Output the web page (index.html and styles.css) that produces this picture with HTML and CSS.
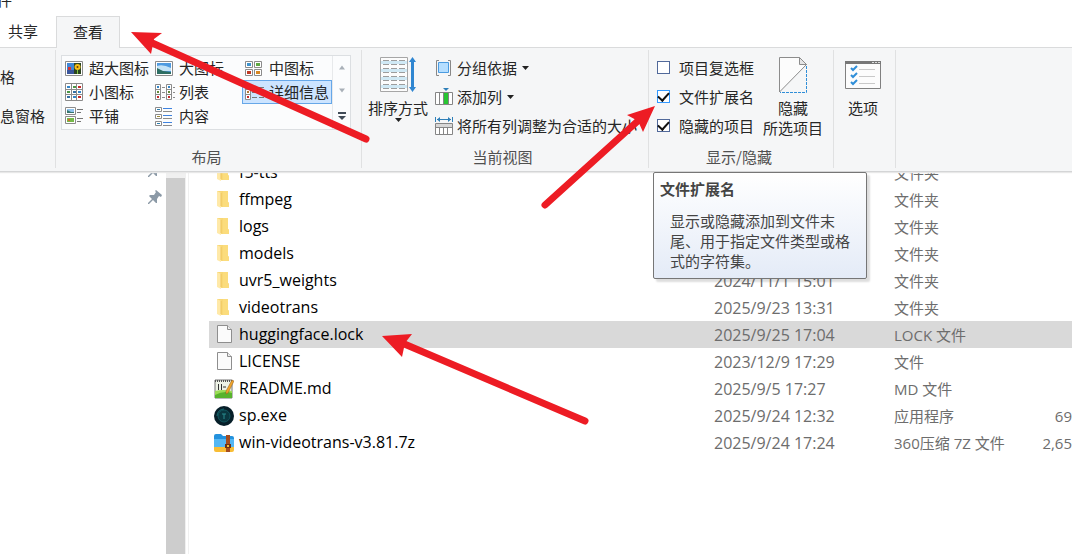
FILE: index.html
```
<!DOCTYPE html>
<html lang="zh-CN">
<head>
  <meta charset="UTF-8">
  <title>文件资源管理器</title>
  <link rel="stylesheet" href="styles.css">
</head>
<body>
  <!-- shared icons -->
  <svg class="defs" width="0" height="0">
    <symbol id="folder" viewBox="0 0 20 20">
      <path d="M3 1h11v11l1 1v4H5z" fill="#f8d775"/>
      <path d="M9 1h5v11l1 1v4H9z" fill="#fbdc7c"/>
      <path d="M3 1l4 2v15l-4-2z" fill="#ffe9a8"/>
      <path d="M7 3v13" stroke="#eec45a" fill="none"/>
    </symbol>
    <symbol id="doc" viewBox="0 0 20 20">
      <path d="M3.500.5h10l4 4v13h-14z" fill="#fbfbfb" stroke="#8e8e8e"/>
      <path d="M13.500.5v4h4" fill="#eee" stroke="#8e8e8e"/>
    </symbol>
    <symbol id="pin" viewBox="0 0 14 14">
      <path d="M8 0l6 5-1 2-2-1-2 3v4l-1 0-3-3-4 4-1 0 0-1 4-4-3-3 1-1h4l2-3-1-1z" fill="#8b99a6"/>
    </symbol>
    <symbol id="scene" viewBox="0 0 6 5">
      <path d="M0 0h6v5H0z" fill="#8fc3ee"/>
      <path d="M0 2l2 1 4 1v1H0z" fill="#35746c"/>
    </symbol>
  </svg>

  <header class="titlebar">件</header>
  <nav class="tabs">
    <button class="tab">共享</button>
    <button class="tab active">查看</button>
  </nav>

  <div class="ribbon">
    <section class="group panes">
      <button>格</button>
      <button>息窗格</button>
    </section>

    <section class="group layout">
      <div class="gallery">
        <div class="views">
          <button><svg width="18" height="15"><path d="M.5.5h17v14H.5z" fill="#fff" stroke="#8b8b8b"/><path d="M2 2h14v11H2z" fill="#3f86d8"/><path d="M2 9h7v4H2z" fill="#39559c"/><path d="M3 6h3v3H3z" fill="#d63434"/><path d="M9 2h7v11H9z" fill="#2b4420"/><circle cx="12.500" cy="6" r="3" fill="#f6bf19"/><circle cx="12.500" cy="6" r="1" fill="#663b0d"/><path d="M12 9h1v4h-1z" fill="#7fc243"/></svg>超大图标</button>
          <button><svg width="18" height="15"><path d="M.5.5h17v14H.5z" fill="#fff" stroke="#8b8b8b"/><path d="M2 2h14v11H2z" fill="#4e9ae0"/><path d="M2 5q6-2 14 2v3H2z" fill="#c3e2f6"/><path d="M2 7l6 3 8 1v2H2z" fill="#2d6e63"/></svg>大图标</button>
          <button><svg width="18" height="15"><g fill="#fff" stroke="#8b8b8b"><path d="M.5.5h7v6h-7zM9.500.5h7v6h-7zM.5 8.500h7v6h-7zM9.500 8.500h7v6h-7z"/></g><path d="M2 2h4v3H2z" fill="#3e92cc"/><path d="M11 2h4v3h-4z" fill="#5fa843"/><path d="M2 10h4v3H2z" fill="#c03a24"/><path d="M11 10h4v3h-4z" fill="#d78723"/></svg>中图标</button>
          <button><svg width="18" height="18"><g fill="#fff" stroke="#8b8b8b"><path d="M.5.5h17v17H.5zM6.500.5v17M11.500.5v17M.5 6.500h17M.5 11.500h17"/></g><path d="M2 3h3v2H2zM13 8h3v2h-3zM8 13h3v2H8z" fill="#3285c8"/><path d="M8 3h3v2H8zM2 8h3v2H2z" fill="#4d9748"/><path d="M13 3h3v2h-3zM13 13h3v2h-3z" fill="#c82929"/><path d="M8 8h3v2H8zM2 13h3v2H2z" fill="#356fa4"/></svg>小图标</button>
          <button><svg width="20" height="16"><g fill="#fff" stroke="#8b8b8b"><path d="M.5.5h5v15h-5zM.5 5.500h5M.5 10.500h5M11.500.5h5v15h-5zM11.500 5.500h5M11.500 10.500h5M7 3.500h3M7 8.500h3M7 13.500h3M18 3.500h2M18 8.500h2M18 13.500h2"/></g><path d="M2 2h2v2H2zM13 2h2v2h-2z" fill="#3285c8"/><path d="M2 7h2v2H2zM13 7h2v2h-2z" fill="#638b3a"/><path d="M2 12h2v2H2zM13 12h2v2h-2z" fill="#c82929"/></svg>列表</button>
          <button class="selected"><svg width="20" height="16"><g fill="#fff" stroke="#8b8b8b"><path d="M.5.5h5v15h-5zM.5 5.500h5M.5 10.500h5"/></g><path d="M7 3.500h5M14 3.500h5M7 8.500h5M14 8.500h5M7 13.500h5M14 13.500h5" stroke="#777"/><path d="M2 2h2v2H2z" fill="#3285c8"/><path d="M2 7h2v2H2z" fill="#b07733"/><path d="M2 12h2v2H2z" fill="#c82929"/></svg>详细信息</button>
          <button><svg width="18" height="18"><g fill="#fff" stroke="#8b8b8b"><path d="M.5.5h10v7H.5zM.5 9.500h10v7H.5z"/></g><path d="M12 2.500h6M12 5.500h4M12 11.500h6M12 14.500h4" stroke="#777"/><path d="M2 2h7v4H2z" fill="#8fc3ee"/><path d="M2 3l4 2h3v1H2z" fill="#35746c"/><path d="M2 11h7v4H2z" fill="#75b849"/><path d="M3 12h2v2H3z" fill="#d66b2c"/></svg>平铺</button>
          <button><svg width="18" height="19"><g fill="#fff" stroke="#8b8b8b"><path d="M.5.5h6v4h-6zM.5 7.500h6v4h-6zM.5 14.500h6v4h-6z"/></g><path d="M8 1.500h9M8 8.500h9M8 15.500h9" stroke="#3f83df"/><path d="M8 4.500h9M8 11.500h9M8 18.500h9" stroke="#8b8b8b"/><path d="M2 2h3v1H2zM2 16h3v1H2z" fill="#287dae"/><path d="M2 9h3v1H2z" fill="#9c8936"/></svg>内容</button>
        </div>
        <div class="gallery-scroll">
          <button aria-label="向上"><svg width="8" height="5"><path d="M1 4.500l3-4 3 4z" fill="#a9b0b8"/></svg></button>
          <button aria-label="向下"><svg width="8" height="5"><path d="M1 .5l3 4 3-4z" fill="#a9b0b8"/></svg></button>
          <button aria-label="更多"><svg width="8" height="8"><path d="M0 0h8v2H0zM0 4h8L4 8z" fill="#414b57"/></svg></button>
        </div>
      </div>
      <h2>布局</h2>
    </section>

    <section class="group current">
      <div class="tools">
        <button class="big">
          <svg width="36" height="36">
            <path d="M.5.5h27v34H.5z" fill="#fcfcfc" stroke="#a6a6a6"/>
            <path d="M1 4h26v3H1zM1 12h26v3H1zM1 20h26v3H1zM1 28h26v3H1z" fill="#d0e9f5"/>
            <path d="M3 3.500h22M3 7.500h22M3 11.500h22M3 15.500h22M3 19.500h22M3 23.500h22M3 27.500h22M3 31.500h22" stroke="#9d9d9d" stroke-dasharray="6 2"/>
            <path d="M32.500 0l3.500 5h-2v25h2l-3.500 5-3.500-5h2V5h-2z" fill="#2f86d1"/>
          </svg>
          <span>排序方式</span>
          <svg class="caret" width="7" height="4"><path d="M0 0h7L3.500 4z"/></svg>
        </button>
        <div class="column">
          <button><svg width="18" height="18"><path d="M4 1.500H1.500v15H4M13 1.500h2.500v15H13" fill="none" stroke="#888"/><path d="M3.500 3.500h10v10h-10z" fill="#b5deff" stroke="#4a9be0"/></svg>分组依据<svg class="caret" width="7" height="4"><path d="M0 0h7L3.500 4z"/></svg></button>
          <button><svg width="18" height="18"><path d="M.5 4.500h17v12H.5zM4.500 4.500v12M8.500 4.500v12M13.500 4.500v12" fill="#fff" stroke="#858585"/><path d="M9 5h4v11H9z" fill="#27c632"/><path d="M8 0h6l-3 3z" fill="#2f7fb8"/></svg>添加列<svg class="caret" width="7" height="4"><path d="M0 0h7L3.500 4z"/></svg></button>
          <button><svg width="18" height="18"><path d="M.5 0v5M17.500 0v5M2 2.500h14" stroke="#2f7fb8"/><path d="M2 2.500L5 0v5zM16 2.500L13 0v5z" fill="#2f7fb8"/><path d="M.5 6.500h17v11H.5zM4.500 10.500v7M8.500 10.500v7M12.500 10.500v7" fill="#fff" stroke="#858585"/><path d="M1 7h16v3H1z" fill="#d7d7d7"/><path d="M0 10.500h18" stroke="#858585"/></svg>将所有列调整为合适的大小</button>
        </div>
      </div>
      <h2>当前视图</h2>
    </section>

    <section class="group show">
      <div class="tools">
        <div class="column">
          <label><input type="checkbox">项目复选框</label>
          <label class="hot"><input type="checkbox" checked>文件扩展名</label>
          <label><input type="checkbox" checked>隐藏的项目</label>
        </div>
        <button class="big">
          <svg width="29" height="36">
            <path d="M.5.5h20l7 7L.5 35z" fill="#fcfcfc"/>
            <path d="M.5 35V.5h20l7 7L.5 35" fill="none" stroke="#8c8c8c"/>
            <path d="M20.500.5v7h7z" fill="#e5e5e5" stroke="#8c8c8c"/>
            <path d="M27.500 9v26.500H1" fill="none" stroke="#2f8ed8" stroke-dasharray="3 1"/>
          </svg>
          <span>隐藏<br>所选项目</span>
        </button>
      </div>
      <h2>显示/隐藏</h2>
      <div class="tooltip" role="tooltip">
        <strong>文件扩展名</strong>
        <p>显示或隐藏添加到文件末尾、用于指定文件类型或格式的字符集。</p>
      </div>
    </section>

    <section class="group options">
      <button class="big">
        <svg width="36" height="36">
          <path d="M.5 4.500h35v27H.5z" fill="#fcfcfc" stroke="#808080"/>
          <path d="M0 4h36v3H0z" fill="#777"/>
          <path d="M27 5h2v1h-2zM30 5h2v1h-2zM33 5h2v1h-2z" fill="#ddd"/>
          <path d="M6 11l2 2 4-4M6 18l2 2 4-4M6 25l2 2 4-4" stroke="#2f8ed8" stroke-width="2" fill="none"/>
          <path d="M14 12.500h16M14 19.500h16M14 26.500h16" stroke="#c9c9c9"/>
        </svg>
        <span>选项</span>
      </button>
    </section>
  </div>

  <div class="explorer">
    <aside class="sidebar">
      <svg class="pin"><use href="#pin"/></svg>
      <svg class="pin"><use href="#pin"/></svg>
    </aside>
    <div class="scrollbar"></div>
    <main>
      <table class="files">
        <colgroup><col><col class="date"><col class="type"><col class="size"></colgroup>
        <tr><td><svg><use href="#folder"/></svg>f5-tts</td><td></td><td>文件夹</td><td></td></tr>
        <tr><td><svg><use href="#folder"/></svg>ffmpeg</td><td></td><td>文件夹</td><td></td></tr>
        <tr><td><svg><use href="#folder"/></svg>logs</td><td></td><td>文件夹</td><td></td></tr>
        <tr><td><svg><use href="#folder"/></svg>models</td><td></td><td>文件夹</td><td></td></tr>
        <tr><td><svg><use href="#folder"/></svg>uvr5_weights</td><td>2024/11/1 15:01</td><td>文件夹</td><td></td></tr>
        <tr><td><svg><use href="#folder"/></svg>videotrans</td><td>2025/9/23 13:31</td><td>文件夹</td><td></td></tr>
        <tr class="selected"><td><svg><use href="#doc"/></svg>huggingface.lock</td><td>2025/9/25 17:04</td><td>LOCK 文件</td><td></td></tr>
        <tr><td><svg><use href="#doc"/></svg>LICENSE</td><td>2023/12/9 17:29</td><td>文件</td><td></td></tr>
        <tr>
          <td><svg viewBox="0 0 20 20"><path d="M1 1h17v18H1z" fill="#eef3e7" stroke="#777"/><path d="M1 12h17v7H1z" fill="#57b32c"/><path d="M1 12q8-2 17 0v2q-8-3-17 2z" fill="#9bdc55"/><path d="M1 2h17" stroke="#555" stroke-width="2" stroke-dasharray="1 1"/><path d="M4.500 5v6M7.500 5v6M9 8h3" stroke="#333"/><path d="M18 1l2 1-6 12-2 1v-3z" fill="#f1a52c" stroke="#8e5b1b" stroke-width=".5"/></svg>README.md</td>
          <td>2025/9/5 17:27</td><td>MD 文件</td><td></td>
        </tr>
        <tr>
          <td><svg viewBox="0 0 20 20"><circle cx="10" cy="10" r="10" fill="#071f29"/><circle cx="10" cy="10" r="6" fill="#0a3740" stroke="#12565e"/><path d="M8 8h4M10 8v5" stroke="#288b8d" fill="none"/><path d="M3 10a7 7 0 0 1 7-7" stroke="#166a72" fill="none"/></svg>sp.exe</td>
          <td>2025/9/24 12:32</td><td>应用程序</td><td>69</td>
        </tr>
        <tr>
          <td><svg viewBox="0 0 20 20"><path d="M0 3q0-2 2-2h5l2 2h9q2 0 2 2v6H0z" fill="#2492dd"/><path d="M0 6h20v10H0z" fill="#54b7f4"/><path d="M0 14h20v3q0 2-2 2H2q-2 0-2-2z" fill="#f8bd35"/><path d="M12 2h4v17h-4z" fill="#a64d1e"/><path d="M11 11h6v4h-6z" fill="#6d3115"/><path d="M13 12h2v2h-2z" fill="#f8bd35"/></svg>win-videotrans-v3.81.7z</td>
          <td>2025/9/24 17:24</td><td>360压缩 7Z 文件</td><td>2,65</td>
        </tr>
      </table>
    </main>
  </div>

  <!-- red pointer arrows over the window -->
  <svg class="arrows" width="600" height="430" aria-hidden="true">
    <path class="shaft" d="M150 42L366 139M640 119L545 205M402 343L585 421"/>
    <path d="M131 32L162 33 154 39 151 54z"/>
    <path d="M655 106L643 132 638 121 627 115z"/>
    <path d="M382 336L412 334 405 343 402 357z"/>
  </svg>
</body>
</html>
```
FILE: styles.css
```
* {
  box-sizing: border-box;
}
html, body {
  height: 100%;
}
body {
  margin: 0;
  display: flex;
  flex-direction: column;
  overflow: hidden;
  background: #fff;
  color: #262626;
  font: 15px/20px "Noto Sans CJK SC", sans-serif;
}
button {
  display: flex;
  align-items: center;
  margin: 0;
  padding: 0;
  border: 0;
  background: none;
  color: inherit;
  font: inherit;
  white-space: nowrap;
}
svg {
  flex: none;
}
.defs, .arrows {
  position: absolute;
}
.arrows {
  top: 0;
  left: 0;
  z-index: 5;
  overflow: visible;
  fill: #ed1c24;
  pointer-events: none;
}
.shaft {
  stroke: #ed1c24;
  stroke-width: 7;
  stroke-linecap: round;
}
.titlebar {
  flex: none;
  height: 16px;
  line-height: 0;
  text-indent: -3px;
}

/* tabs */
.tabs {
  display: flex;
  flex: none;
  height: 32px;
  margin-bottom: -1px;
  position: relative;
  z-index: 3;
}
.tab {
  justify-content: center;
  padding: 0 18px 2px 8px;
}
.tab.active {
  width: 64px;
  padding: 0 0 2px;
  background: #f5f6f7;
  border: 1px solid #dadbdc;
  border-bottom: 0;
}

/* ribbon */
.ribbon {
  display: flex;
  flex: none;
  position: relative;
  z-index: 2;
  padding: 2px 0 3px;
  background: #f5f6f7;
  border-top: 1px solid #dadbdc;
  border-bottom: 1px solid #d4d5d6;
  box-shadow: 0 1px 1px #e8e8e8;
}
.group {
  display: flex;
  flex: none;
  flex-direction: column;
  justify-content: space-between;
  position: relative;
  height: 118px;
  border-right: 1px solid #e0e1e2;
}
.group h2 {
  margin: 0 0 1px;
  color: #505050;
  font-size: 15px;
  font-weight: normal;
  text-align: center;
}
.panes {
  width: 56px;
  justify-content: flex-start;
  gap: 19px;
  padding-top: 17px;
}
.gallery {
  display: flex;
  margin: 5px 10px 0 5px;
  height: 75px;
  border: 1px solid #dcdfe2;
  background: #fbfcfd;
}
.layout h2 {
  padding-right: 4px;
}
.views {
  display: grid;
  grid-template-columns: repeat(3, 90px);
  grid-template-rows: repeat(3, 24px);
}
.views button {
  padding-left: 3px;
}
.views svg {
  margin-right: 6px;
}
.views svg[width="20"] {
  margin-right: 4px;
}
.views .selected {
  background: #cce4ff;
  outline: 1px solid #66a7e8;
  outline-offset: -1px;
}
.gallery-scroll {
  display: grid;
  width: 18px;
  border-left: 1px solid #e7e9eb;
}
.gallery-scroll button {
  justify-content: center;
}
.tools {
  display: flex;
  align-items: flex-start;
  padding-top: 7px;
}
.big {
  flex-direction: column;
}
.big span {
  margin-top: 5px;
}
.column {
  display: grid;
  grid-auto-rows: 29px;
  margin-top: -4px;
}
.column button svg:first-child {
  margin-right: 4px;
}
.column .caret {
  margin-left: 5px;
}
.caret {
  fill: #222;
}
.current {
  width: 287px;
  padding: 0 11px 0 6px;
}
.current .tools {
  gap: 7px;
}
.show {
  width: 185px;
  padding: 0 12px 0 8px;
}
.show .tools {
  gap: 9px;
}
.column label {
  display: flex;
  align-items: center;
  white-space: nowrap;
}
input[type="checkbox"] {
  appearance: none;
  display: grid;
  place-items: center;
  width: 13px;
  height: 13px;
  margin: 0 9px 0 0;
  border: 1px solid #51699a;
  background: #fff;
}
.hot input[type="checkbox"] {
  border-color: #3399ff;
}
input:checked::after {
  content: "";
  width: 9px;
  height: 5px;
  border: solid #111;
  border-width: 0 0 2px 2px;
  transform: translateY(-1px) rotate(-48deg);
}
.options {
  width: 62px;
  align-items: center;
  padding: 7px 3px 0 0;
}
.options .big {
  margin-bottom: auto;
}
.tooltip {
  position: absolute;
  top: 122px;
  left: 4px;
  width: 214px;
  padding: 6px 6px 7px;
  border: 1px solid #767676;
  border-radius: 2px;
  background: linear-gradient(#fff, #e4ebf7);
  box-shadow: 3px 3px 2px #0002;
  color: #444;
}
.tooltip p {
  margin: 12px 8px 0 10px;
}

/* file list */
.explorer {
  display: flex;
  flex: 1;
  min-height: 0;
  overflow: hidden;
}
.sidebar {
  display: flex;
  flex-direction: column;
  align-items: flex-end;
  gap: 13px;
  width: 166px;
  margin-top: -9px;
  padding-right: 4px;
}
.pin {
  width: 14px;
  height: 14px;
}
.scrollbar {
  width: 20px;
  border-top: 6px solid #f0f0f0;
  border-right: 1px solid #f0f0f0;
  background: #cdcdcd;
}
main {
  flex: 1;
  min-width: 0;
  margin-left: 2px;
  padding-left: 20px;
  border-left: 1px solid #f0f0f0;
}
.files {
  width: 100%;
  margin-top: -13px;
  border-collapse: collapse;
  table-layout: fixed;
  color: #6d6d6d;
}
.files .date {
  width: 180px;
}
.files .type {
  width: 124px;
}
.files .size {
  width: 54px;
}
.files td {
  height: 27px;
  padding: 0;
  font-family: "Open Sans", "Noto Sans CJK SC", sans-serif;
  white-space: nowrap;
}
.files td:first-child {
  padding-left: 5px;
  color: #000;
}
.files td:first-child,
.files td:nth-child(2) {
  font-size: 16px;
}
.files td:last-child {
  text-align: right;
}
.files svg {
  width: 20px;
  height: 20px;
  margin-right: 5px;
  vertical-align: middle;
}
.files .selected {
  background: #d9d9d9;
}
```
